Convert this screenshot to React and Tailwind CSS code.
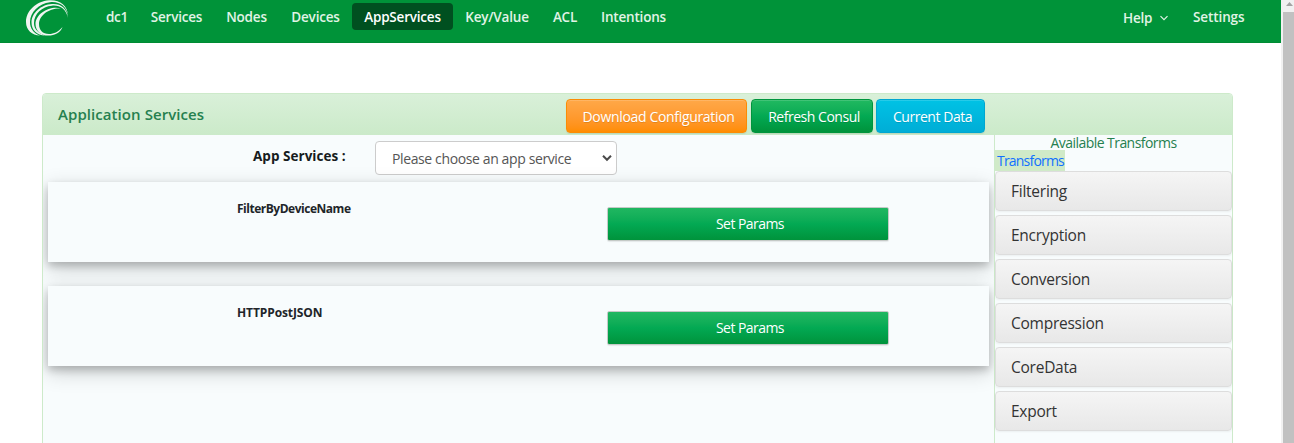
import React from 'react';

const navItems = [
  { label: 'dc1', width: 'w-[44px]' },
  { label: 'Services', width: 'w-[75px]' },
  { label: 'Nodes', width: 'w-[65px]' },
  { label: 'Devices', width: 'w-[73px]' },
  { label: 'AppServices', width: 'w-[101px]', active: true },
  { label: 'Key/Value', width: 'w-[88px]' },
  { label: 'ACL', width: 'w-[48px]' },
  { label: 'Intentions', width: 'w-[89px]' },
];

const services = [
  { name: 'FilterByDeviceName', tracking: 'tracking-[-0.48px]' },
  { name: 'HTTPPostJSON', tracking: 'tracking-[-0.1px]' },
];
const transforms = ['Filtering', 'Encryption', 'Conversion', 'Compression', 'CoreData', 'Export'];

function Logo() {
  return (
    <svg className="block h-[37px] w-[44px]" viewBox="0 0 44 37" fill="#f0f5f1">
      <path d="M43 16C43 5 34 -0.500 24 0.300C11 1.500 1 11 1 22C1 30 7 35.500 15 35.500C8 33 5 28 5 22C5 12 14 3.500 25 2.200C34 1.200 42 6 43 16Z" />
      <path d="M43 18C42 8 36 3.500 27 4C16 4.600 6.500 13 6.500 22.500C6.500 30 12 35.500 20 35.500C13 33 9 29 9 23C9 14 17 6.500 27 5.700C35 5 41 9 43 18Z" />
      <path d="M36 8.500C26 5 10.500 13 10.500 24C10.500 31 16 35.600 23 35.600C30 35.600 36 32 37.500 27C33 32 29 34 24 34C17.500 34 14 30 14 24C14 15 25 7.500 36 8.500Z" />
    </svg>
  );
}

function Navbar() {
  return (
    <nav className="flex h-[43px] items-start border-b border-[#008c34] bg-[#009339] text-[13.5px] font-semibold text-[#e0f4e6]">
      <div className="w-[95px] shrink-0 pl-[25px]"><Logo /></div>
      {navItems.map(({ label, width, active }) => (
        <a
          key={label}
          className={`${width} mt-[3px] h-[27px] shrink-0 rounded-[4px] text-center leading-[29px] tracking-[-0.2px] whitespace-nowrap ${active ? 'bg-[#005020] text-white' : ''}`}
        >
          {label}
        </a>
      ))}
      <div className="flex-1" />
      <a className="mt-1 flex w-[70px] items-center leading-[28px] tracking-[-0.2px]">
        Help
        <svg className="ml-2 h-2 w-2" viewBox="0 0 8 8" fill="none" stroke="currentColor" strokeWidth="1.2">
          <path d="M0.5 2.2L4 5.7L7.5 2.2" />
        </svg>
      </a>
      <a className="mt-[3px] w-[88px] leading-[29px] tracking-[-0.1px]">Settings</a>
    </nav>
  );
}

const buttonBase =
  'h-[34px] rounded-[4px] border text-[14px] leading-[33px] whitespace-nowrap text-white shadow-[inset_0_1px_0_rgba(255,255,255,0.15),0_1px_1px_rgba(0,0,0,0.08)] [text-shadow:0_1px_0_rgba(0,0,0,0.12)]';

function ServiceCard({ name, tracking }) {
  return (
    <section className="mx-[5px] flex h-20 bg-[#f8fcfd] shadow-[0_4px_8px_0_rgba(0,0,0,0.2),0_6px_20px_0_rgba(0,0,0,0.19)]">
      <h3 className={`w-[559px] pt-[17px] pl-[189px] text-[12px] leading-5 font-bold text-[#212529] ${tracking}`}>{name}</h3>
      <button className="mt-[25px] h-[34px] w-[282px] rounded-[2px] border border-[#c5cac7] bg-linear-to-b from-[#20b761] via-[#03a953] to-[#00933b] text-center text-[14px] leading-8 text-white shadow-[0_1px_1px_rgba(0,0,0,0.08)]">
        <span className="ml-1 tracking-[-0.55px]">Set Params</span>
      </button>
    </section>
  );
}

export default function App() {
  return (
    <div className="flex h-[443px] w-[1294px] overflow-hidden bg-white font-['Open_Sans','Noto_Sans',sans-serif]">
      <div className="w-[1281px] shrink-0">
        <Navbar />
        <main className="mt-[50px] ml-[42px] h-[370px] w-[1191px] rounded-t-[4px] border border-[#cdeaca] bg-[#f8fcfd]">
          <header className="flex h-[41px] items-start rounded-t-[3px] bg-linear-to-b from-[#d9f0d9] to-[#cbeac9]">
            <h1 className="w-[523px] pl-[15px] text-[15px] leading-[41px] font-semibold tracking-[0.07px] text-[#25804f]">Application Services</h1>
            <div className="flex pt-[5px]">
              <button className={`${buttonBase} mr-1 w-[181px] border-[#fb8c05] bg-linear-to-b from-[#ffa848] to-[#ff8d00] pl-1 tracking-[-0.33px]`}>Download Configuration</button>
              <button className={`${buttonBase} mr-[3px] w-[122px] border-[#00953d] bg-linear-to-b from-[#20b960] via-[#03a953] to-[#00933b] pl-1 tracking-[-0.47px]`}>Refresh Consul</button>
              <button className={`${buttonBase} w-[109px] border-[#00a6d1] bg-linear-to-b from-[#00c2e5] to-[#00add6] pl-1 tracking-[-0.45px]`}>Current Data</button>
            </div>
          </header>
          <div className="flex h-[328px]">
            <div className="w-[951px] shrink-0 overflow-x-clip">
              <div className="flex h-[47px] items-start pt-[6px]">
                <label className="w-[332px] pl-[210px] text-[13.5px] leading-[31px] font-bold tracking-[0.03px] whitespace-nowrap text-[#161b20]">App Services :</label>
                <div className="flex h-[34px] w-[242px] items-center justify-between rounded-[4px] border border-[#ccc] bg-white pr-1 pl-4 text-[14px] whitespace-nowrap text-[#555]">
                  <span className="tracking-[-0.38px]">Please choose an app service</span>
                  <svg className="h-[10px] w-[10px]" viewBox="0 0 10 10" fill="none" stroke="#4a4a4a" strokeWidth="2">
                    <path d="M1 2.8L5 6.8L9 2.8" />
                  </svg>
                </div>
              </div>
              <div className="flex flex-col gap-6">
                {services.map((service) => <ServiceCard key={service.name} {...service} />)}
              </div>
            </div>
            <aside className="w-[238px] shrink-0 border-l border-[#cdeaca] bg-[#f8fcfd]">
              <h2 className="h-[15px] text-center text-[14px] leading-[16px] tracking-[-0.55px] text-[#25804f]">Available Transforms</h2>
              <div className="flex h-[21px]">
                <a className="w-[70px] bg-[#d0eac8] pl-[2px] text-[14px] leading-[21px] tracking-[-0.8px] whitespace-nowrap text-[#1070ff]">Transforms</a>
              </div>
              <div className="flex w-[237px] flex-col gap-1">
                {transforms.map((name) => (
                  <div key={name} className="h-10 rounded-[4px] border border-[#ddd] bg-linear-to-b from-[#f5f5f5] to-[#e8e8e8] pl-[15px] text-[15.5px] leading-[39px] tracking-[-0.25px] text-[#333] shadow-[0_1px_2px_rgba(0,0,0,0.05)]">
                    {name}
                  </div>
                ))}
              </div>
            </aside>
          </div>
        </main>
      </div>
      <div className="flex w-[13px] shrink-0 flex-col bg-[#f1f1f1] pl-[2px]">
        <svg className="h-3 w-[11px]" viewBox="0 0 11 12" fill="#a3a3a3"><path d="M3 6L6.5 2L10 6Z" /></svg>
        <div className="flex-1 bg-[#c1c1c1]" />
      </div>
    </div>
  );
}
